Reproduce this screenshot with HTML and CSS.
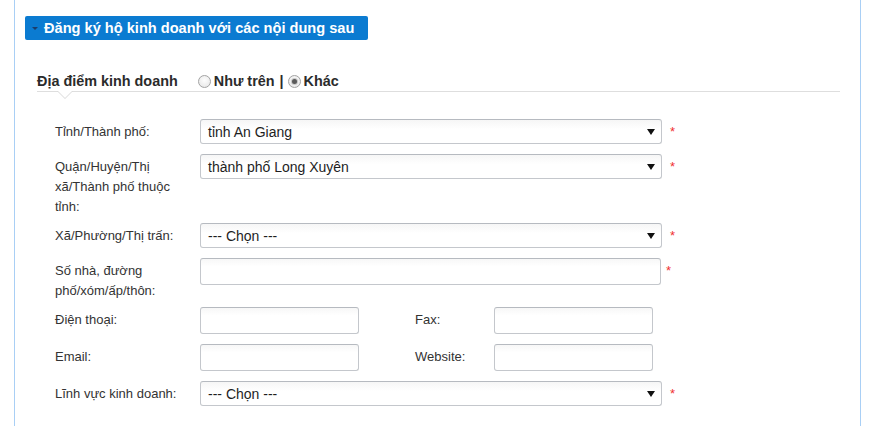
FILE: index.html
```html
<!DOCTYPE html>
<html lang="vi">
<head>
<meta charset="utf-8">
<title>Đăng ký hộ kinh doanh</title>
<link rel="stylesheet" href="styles.css">
</head>
<body>
<div class="panel">
  <div class="bar"><span class="caret"></span><span class="bar-text">Đăng ký hộ kinh doanh với các nội dung sau</span></div>
  <div class="section">
    <div class="title-row">
      <span class="title">Địa điểm kinh doanh</span>
      <span class="radio"></span><span class="opt">Như trên</span>
      <span class="sep">|</span>
      <span class="radio checked"></span><span class="opt">Khác</span>
    </div>
    <div class="form">
      <div class="row">
        <div class="label">Tỉnh/Thành phố:</div>
        <div class="select"><span>tỉnh An Giang</span><svg class="arrow" width="8" height="6" viewBox="0 0 8 6"><path d="M0 0H8L4 6Z" fill="#111"/></svg></div>
        <span class="req req-sel">*</span>
      </div>
      <div class="row">
        <div class="label">Quận/Huyện/Thị<br>xã/Thành phố thuộc<br>tỉnh:</div>
        <div class="select"><span>thành phố Long Xuyên</span><svg class="arrow" width="8" height="6" viewBox="0 0 8 6"><path d="M0 0H8L4 6Z" fill="#111"/></svg></div>
        <span class="req req-sel">*</span>
      </div>
      <div class="row">
        <div class="label">Xã/Phường/Thị trấn:</div>
        <div class="select"><span>--- Chọn ---</span><svg class="arrow" width="8" height="6" viewBox="0 0 8 6"><path d="M0 0H8L4 6Z" fill="#111"/></svg></div>
        <span class="req req-sel">*</span>
      </div>
      <div class="row">
        <div class="label">Số nhà, đường<br>phố/xóm/ấp/thôn:</div>
        <input class="input wide" type="text">
        <span class="req req-inp">*</span>
      </div>
      <div class="row">
        <div class="label">Điện thoại:</div>
        <input class="input short" type="text">
        <div class="label label2">Fax:</div>
        <input class="input short" type="text">
      </div>
      <div class="row">
        <div class="label">Email:</div>
        <input class="input short" type="text">
        <div class="label label2">Website:</div>
        <input class="input short" type="text">
      </div>
      <div class="row">
        <div class="label">Lĩnh vực kinh doanh:</div>
        <div class="select"><span>--- Chọn ---</span><svg class="arrow" width="8" height="6" viewBox="0 0 8 6"><path d="M0 0H8L4 6Z" fill="#111"/></svg></div>
        <span class="req req-sel">*</span>
      </div>
    </div>
  </div>
</div>
</body>
</html>
```
FILE: styles.css
```css
* { box-sizing: border-box; }
html, body { margin: 0; padding: 0; background: #fff; }
body {
  font-family: "Liberation Sans", Arial, sans-serif;
  color: #333;
  overflow: hidden;
}
.panel {
  margin-left: 14px;
  width: 847px;
  height: 426px;
  border-left: 1px solid #a9cff5;
  border-right: 1px solid #a9cff5;
  padding-top: 16px;
}
.bar {
  margin-left: 10px;
  width: 343px;
  height: 24px;
  background: #0b7bd1;
  border-radius: 2px;
  display: flex;
  align-items: center;
  padding-left: 7px;
}
.caret {
  width: 0;
  height: 0;
  border-left: 3px solid transparent;
  border-right: 3px solid transparent;
  border-top: 3px solid #1b3d6b;
  margin-right: 6px;
  margin-top: 1px;
}
.bar-text {
  color: #fff;
  font-weight: bold;
  font-size: 14.6px;
}
.section {
  margin: 32px 20px 0 22px;
}
.title-row {
  position: relative;
  height: 20px;
  line-height: 19px;
  border-bottom: 1px solid #dedede;
  display: flex;
  align-items: flex-start;
  font-size: 14.4px;
  font-weight: bold;
  color: #2b2b2b;
}
.title-row::before,
.title-row::after {
  content: "";
  position: absolute;
  width: 0;
  height: 0;
  border-left: 8px solid transparent;
  border-right: 8px solid transparent;
}
.title-row::before {
  left: 20px;
  top: 19px;
  border-top: 8px solid #d8d8d8;
}
.title-row::after {
  left: 21px;
  top: 19px;
  border-left-width: 7px;
  border-right-width: 7px;
  border-top: 7px solid #fff;
}
.title { margin-right: 20px; }
.radio {
  width: 13px;
  height: 13px;
  flex: none;
  border-radius: 50%;
  border: 1px solid #a3a3a3;
  background: radial-gradient(circle at 50% 40%, #fdfdfd 0%, #e4e4e4 100%);
  margin-top: 3px;
  margin-right: 3px;
  position: relative;
}
.radio.checked::after {
  content: "";
  position: absolute;
  left: 3px;
  top: 3px;
  width: 5px;
  height: 5px;
  border-radius: 50%;
  background: #5a5a5a;
  box-shadow: 0 0 0 1px #c8c8c8;
}
.sep { margin: 0 4px 0 5px; }
.form {
  padding-left: 18px;
  margin-top: 27px;
  display: flex;
  flex-direction: column;
  gap: 10px;
}
.row {
  display: flex;
  align-items: flex-start;
}
.label {
  width: 145px;
  flex: none;
  font-size: 13px;
  line-height: 20px;
  padding-top: 3px;
  margin-bottom: -4px;
  color: #333;
}
.label2 {
  width: 79px;
  margin-left: 56px;
}
.select {
  width: 462px;
  height: 25px;
  border: 1px solid #c4c7cc;
  border-top-color: #b6bac0;
  border-radius: 3px;
  background: linear-gradient(#f6f6f6, #fff 40%);
  display: flex;
  align-items: center;
  justify-content: space-between;
  padding: 0 6px 0 7px;
  font-size: 14px;
  color: #1e1e1e;
}
.arrow { margin-top: 1px; }
.input {
  height: 27px;
  border: 1px solid #c4c7cc;
  border-top-color: #b6bac0;
  border-radius: 3px;
  background: linear-gradient(#f7f7f7, #fff 30%);
  font-family: inherit;
  font-size: 14px;
  padding: 0 6px;
  margin: 0;
  outline: none;
}
.input.wide { width: 461px; }
.input.short { width: 159px; }
.req {
  color: #f03030;
  font-size: 13px;
  line-height: 12px;
}
.req-sel { margin-left: 8px; margin-top: 7px; }
.req-inp { margin-left: 5px; margin-top: 7px; }
```
